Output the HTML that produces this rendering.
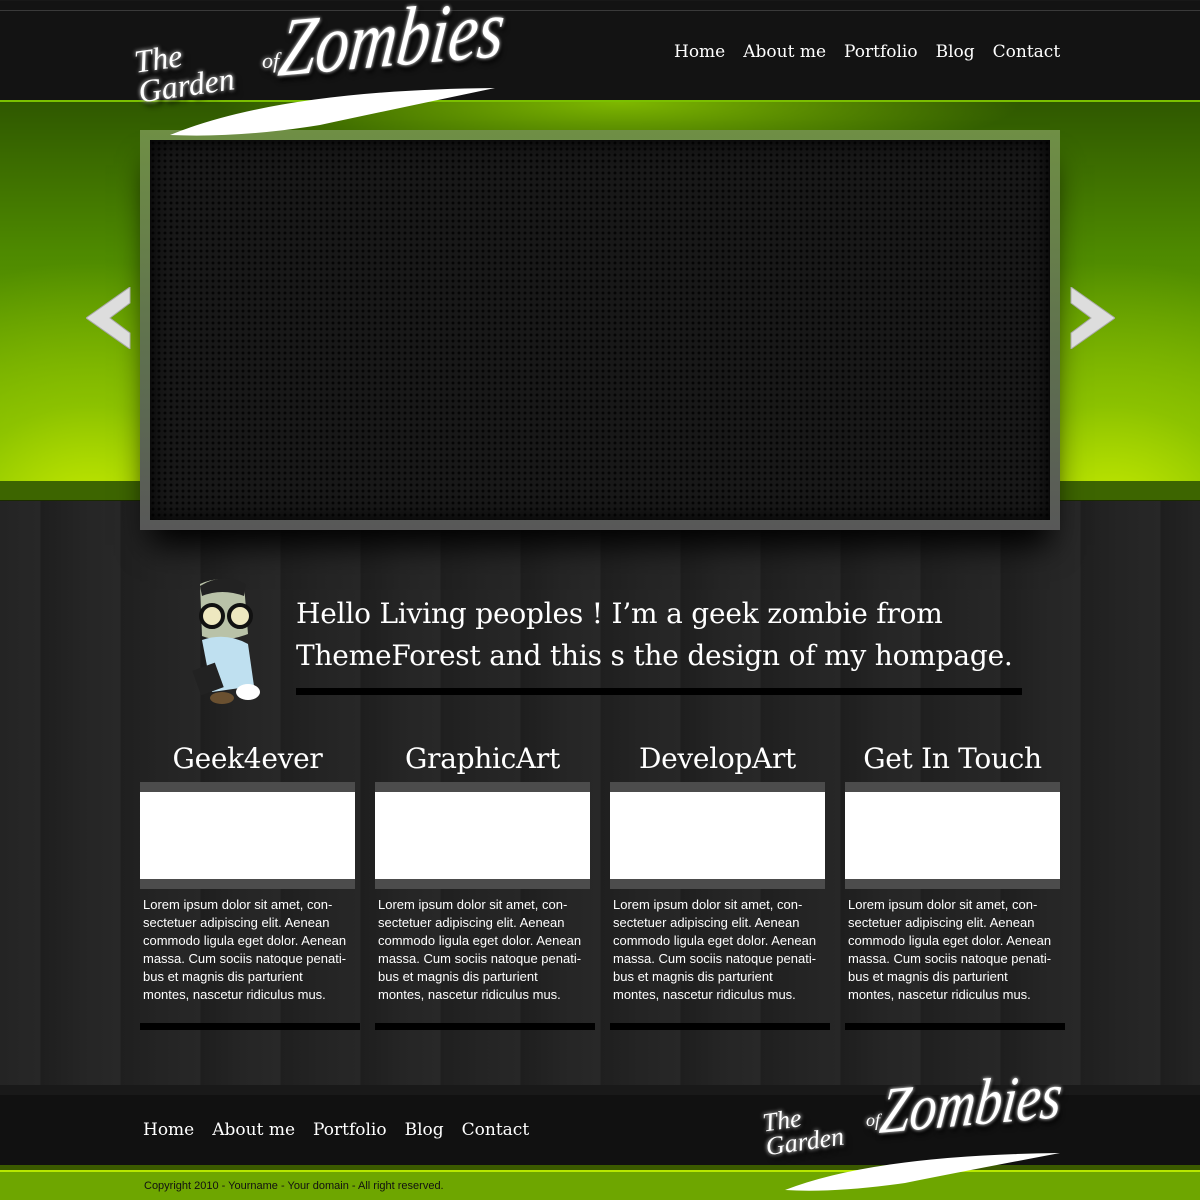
<!DOCTYPE html>
<html><head><meta charset="utf-8"><style>
*{margin:0;padding:0;box-sizing:border-box}
body{width:1200px;height:1200px;position:relative;overflow:hidden;background:#262626;font-family:"DejaVu Serif","Liberation Serif",serif;color:#fff}
.abs{position:absolute}
#top{left:0;top:0;width:1200px;height:100px;background:#131313;border-top:1px solid #181818}
#top:before{content:"";position:absolute;left:0;top:9px;width:1200px;height:1px;background:#3a3a3a}
#green{left:0;top:100px;width:1200px;height:381px;border-top:2px solid #7bc000;
background:radial-gradient(ellipse 300px 260px at 90px 420px,#c8ec00 0%,rgba(160,210,0,.6) 45%,rgba(0,0,0,0) 100%),radial-gradient(ellipse 300px 260px at 1110px 420px,#c8ec00 0%,rgba(160,210,0,.6) 45%,rgba(0,0,0,0) 100%),radial-gradient(ellipse 400px 60px at 620px 0px,#7fb800 0%,rgba(0,0,0,0) 100%),linear-gradient(#2f5800,#4e8a00 40%,#7bb800 100%)}
#band{left:0;top:481px;width:1200px;height:20px;background:#3d6500;border-bottom:1px solid #1a2a00}
#wood{left:0;top:501px;width:1200px;height:584px;background:repeating-linear-gradient(90deg,#242424 0,#272727 40px,#1e1e1e 41px,#252525 82px,#282828 120px,#1f1f1f 121px,#242424 160px)}
#frame{left:140px;top:130px;width:920px;height:400px;background:linear-gradient(#6f8f45,#5e6e50 60%,#585858);box-shadow:0 25px 30px -10px #000}
#screen{left:150px;top:140px;width:900px;height:380px;background-color:#181818;background-image:radial-gradient(#050505 1.3px,transparent 1.6px);background-size:6px 6px;box-shadow:inset 0 0 20px #000}
.nav{font-size:17px;color:#fff;white-space:nowrap}
.nav span{margin-right:18px}
#intro{left:296px;top:593px;font-size:28px;line-height:42px;color:#fff;letter-spacing:-0.2px}
#introline{left:296px;top:688px;width:726px;height:7px;background:#000}
.col{position:absolute;top:740px;width:220px}
.col h2{font-weight:normal;font-size:28px;text-align:center;width:215px;height:42px;line-height:38px;letter-spacing:-0.3px}
.col .img{width:215px;height:107px;background:#4c4c4c;padding:10px 0}
.col .img div{background:#fff;height:87px}
.col p{font-family:"Liberation Sans",Arial,sans-serif;font-size:13px;line-height:18px;padding:7px 3px;width:212px;color:#fff;height:134px}
.col .bar{width:220px;height:7px;background:#000}
#foot{left:0;top:1085px;width:1200px;height:80px;background:#111;border-top:10px solid #191919}
#fgreen{left:0;top:1165px;width:1200px;height:35px;background:#6ea600;border-top:5px solid #3b5a00}
#fgreen:before{content:"";position:absolute;left:0;top:0;width:1200px;height:2px;background:#b8e800}
#copy{left:144px;top:1180px;font-family:"Liberation Sans",Arial,sans-serif;font-size:11px;color:#111}
.logo{font-family:"Liberation Serif",serif;font-style:italic;color:#fff;text-shadow:0 0 4px #fff,3px 5px 6px #000;white-space:nowrap}
</style></head><body>
<div id="top" class="abs"></div>
<div id="green" class="abs"></div>
<div id="band" class="abs"></div>
<div id="wood" class="abs"></div>
<div id="frame" class="abs"></div>
<div id="screen" class="abs"></div>

<div class="abs logo" style="left:136px;top:40px;font-size:32px;line-height:30px;transform:rotate(-8deg)">The<br>Garden</div>
<div class="abs logo" style="left:262px;top:48px;font-size:22px">of</div>
<div class="abs logo" style="left:285px;top:0px;font-size:84px;transform-origin:0 0;transform:scaleX(0.78) skewX(-12deg) rotate(-4deg)">Zombies</div>
<svg class="abs" style="left:160px;top:80px" width="340" height="60"><path d="M10 55 Q120 10 335 8 Q230 30 160 45 Q80 58 10 55Z" fill="#fff"/></svg>

<div class="abs nav" style="left:674px;top:42px"><span>Home</span><span>About me</span><span>Portfolio</span><span>Blog</span><span style="margin-right:0">Contact</span></div>

<svg class="abs" style="left:86px;top:287px" width="46" height="62"><path d="M44 0 L0 31 L44 62 L44 46 L24 31 L44 16Z" fill="#ddd" stroke="#aaa"/></svg>
<svg class="abs" style="left:1069px;top:287px" width="46" height="62"><path d="M2 0 L46 31 L2 62 L2 46 L22 31 L2 16Z" fill="#ddd" stroke="#aaa"/></svg>

<svg class="abs" style="left:182px;top:574px" width="84" height="134">
<path d="M18 10 Q40 0 62 10 L66 60 Q40 70 20 62Z" fill="#b9c2a8"/>
<path d="M18 12 Q40 -2 64 10 L62 22 Q40 14 20 22Z" fill="#222"/>
<circle cx="30" cy="42" r="11" fill="#eee8c0" stroke="#111" stroke-width="4"/>
<circle cx="58" cy="42" r="11" fill="#eee8c0" stroke="#111" stroke-width="4"/>
<path d="M20 66 Q44 58 66 70 L72 112 L30 118Z" fill="#bfe0f0"/>
<rect x="14" y="92" width="24" height="26" fill="#222" transform="rotate(-20 26 105)"/>
<ellipse cx="40" cy="124" rx="12" ry="6" fill="#6a5030"/>
<ellipse cx="66" cy="118" rx="12" ry="8" fill="#fff"/>
</svg>

<div id="intro" class="abs">Hello Living peoples ! I’m a geek zombie from<br>ThemeForest and this s the design of my hompage.</div>
<div id="introline" class="abs"></div>

<div class="col" style="left:140px"><h2>Geek4ever</h2><div class="img"><div></div></div><p>Lorem ipsum dolor sit amet, con-sectetuer adipiscing elit. Aenean commodo ligula eget dolor. Aenean massa. Cum sociis natoque penati-bus et magnis dis parturient montes, nascetur ridiculus mus.</p><div class="bar"></div></div>
<div class="col" style="left:375px"><h2>GraphicArt</h2><div class="img"><div></div></div><p>Lorem ipsum dolor sit amet, con-sectetuer adipiscing elit. Aenean commodo ligula eget dolor. Aenean massa. Cum sociis natoque penati-bus et magnis dis parturient montes, nascetur ridiculus mus.</p><div class="bar"></div></div>
<div class="col" style="left:610px"><h2>DevelopArt</h2><div class="img"><div></div></div><p>Lorem ipsum dolor sit amet, con-sectetuer adipiscing elit. Aenean commodo ligula eget dolor. Aenean massa. Cum sociis natoque penati-bus et magnis dis parturient montes, nascetur ridiculus mus.</p><div class="bar"></div></div>
<div class="col" style="left:845px"><h2>Get In Touch</h2><div class="img"><div></div></div><p>Lorem ipsum dolor sit amet, con-sectetuer adipiscing elit. Aenean commodo ligula eget dolor. Aenean massa. Cum sociis natoque penati-bus et magnis dis parturient montes, nascetur ridiculus mus.</p><div class="bar"></div></div>

<div id="foot" class="abs"></div>
<div class="abs nav" style="left:143px;top:1120px"><span>Home</span><span>About me</span><span>Portfolio</span><span>Blog</span><span style="margin-right:0">Contact</span></div>
<div id="fgreen" class="abs"></div>
<div id="copy" class="abs">Copyright 2010 - Yourname - Your domain - All right reserved.</div>

<div class="abs logo" style="left:764px;top:1106px;font-size:26px;line-height:24px;transform:rotate(-8deg)">The<br>Garden</div>
<div class="abs logo" style="left:866px;top:1110px;font-size:18px">of</div>
<div class="abs logo" style="left:885px;top:1074px;font-size:66px;transform-origin:0 0;transform:scaleX(0.8) skewX(-12deg) rotate(-4deg)">Zombies</div>
<svg class="abs" style="left:775px;top:1145px" width="290" height="50"><path d="M10 45 Q100 10 285 8 Q190 26 130 38 Q60 48 10 45Z" fill="#fff"/></svg>
</body></html>
